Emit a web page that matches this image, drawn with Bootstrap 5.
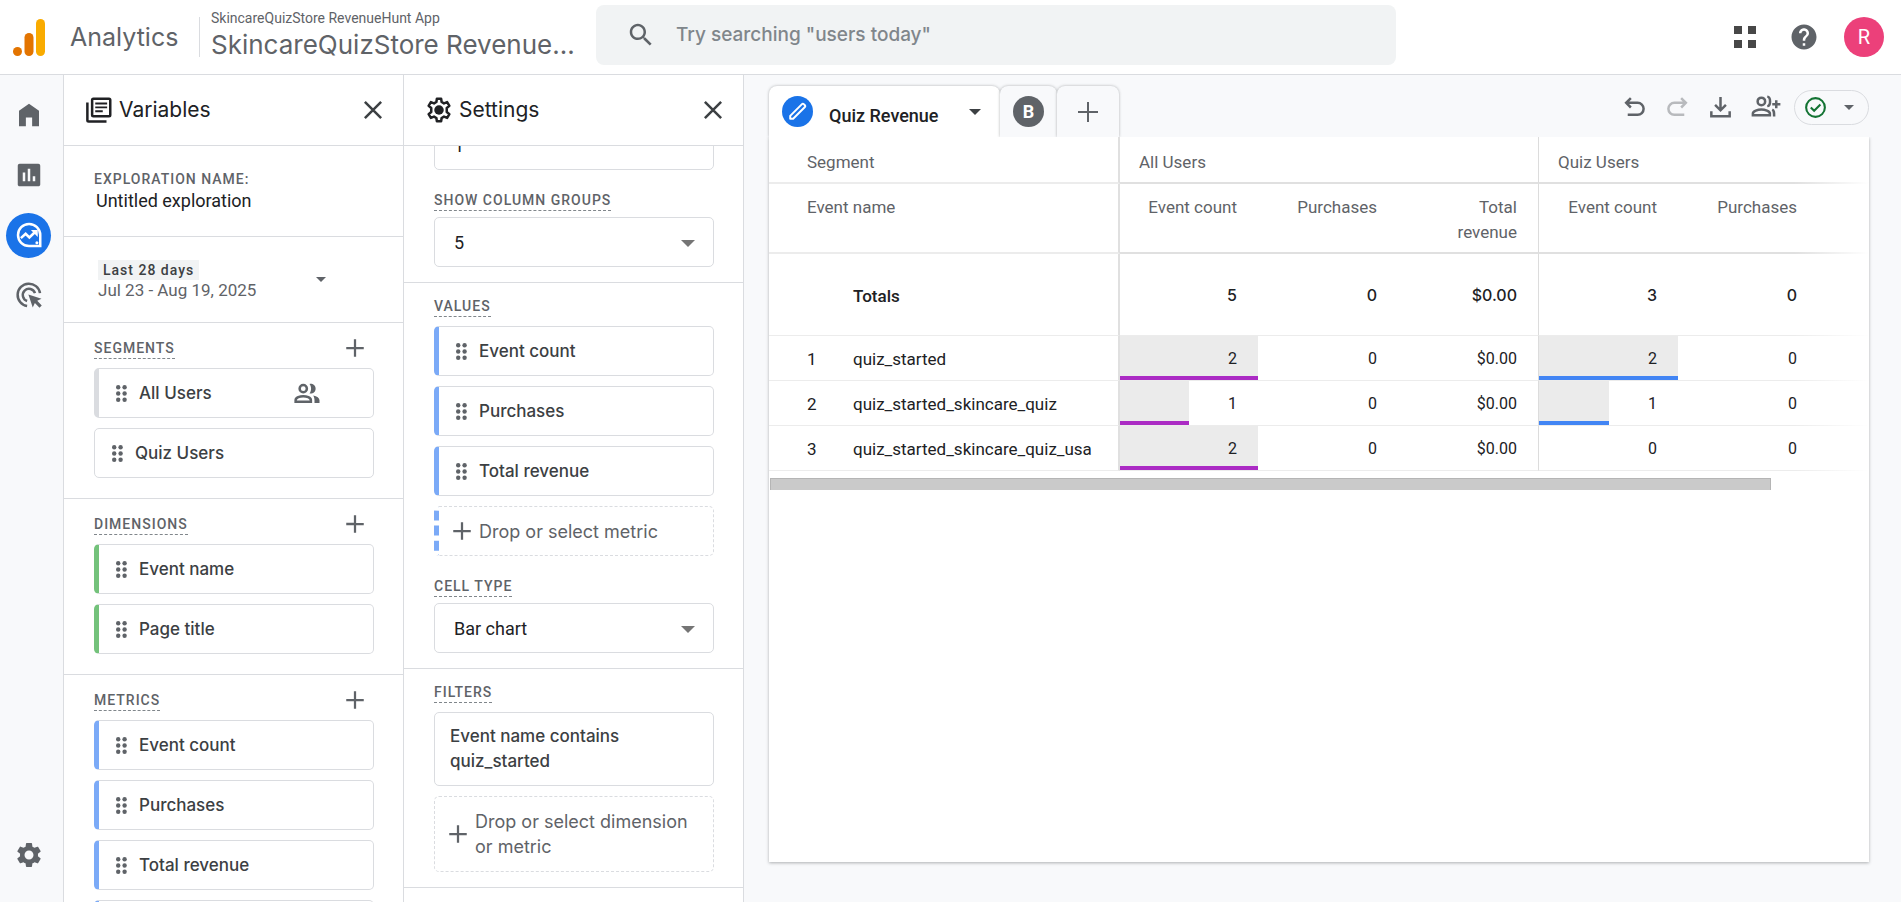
<!DOCTYPE html>
<html lang="en">
<head>
<meta charset="utf-8">
<meta name="viewport" content="width=device-width, initial-scale=1">
<title>Analytics | Quiz Revenue</title>
<link href="https://cdn.jsdelivr.net/npm/bootstrap@5.3.0/dist/css/bootstrap.min.css" rel="stylesheet">
<style>
:root{--line:#dadce0;--ink:#202124;--grey:#5f6368;--paper:#f8f9fb;--brand:Inter,"Open Sans",sans-serif;--ui:Roboto,"Liberation Sans",sans-serif}
body{font-family:var(--ui);font-size:17px;color:var(--ink);background:var(--paper);line-height:25px;height:100vh;overflow:hidden}
.ic{width:30px;height:30px;fill:currentColor;flex:none;display:block}
.ic-sm{width:25px;height:25px}
.st{fill:none;stroke:currentColor;stroke-width:2}
.st-bold{stroke-width:2.4}
.plain{background:none;border:0;padding:0;color:inherit;display:block}
.topbar{height:75px;background:#fff;border-bottom:1px solid var(--line);padding-right:17px}
.brandbox{width:596px;color:var(--grey)}
.logo{width:34px;height:40px;margin-left:12px}
.product{font:400 25px/34px var(--brand);margin-left:24px;width:129px}
.account{border-left:1px solid var(--line);height:40px;padding:0 0 6px 11px}
.acc-small{font-size:14px;line-height:22px}
.acc-big{font:400 26px/32px var(--brand)}
.search{height:60px;max-width:800px;background:#f1f3f4;border-radius:8px;padding:0 30px;margin-bottom:5px}
.search input{background:none;border:0;outline:0;font:500 19px/30px var(--brand);color:var(--grey);margin-left:18px}
.search input::placeholder{color:#80868b;opacity:1}
.avatar{width:40px;height:40px;border-radius:50%;background:#ec407a;color:#fff;font-size:20px}
.rail{width:64px;border-right:1px solid var(--line);padding:10px 0 17px 6px;color:var(--grey)}
.rail a{width:45px;height:60px;color:inherit;display:flex;align-items:center;justify-content:center}
.rail a.on span{width:45px;height:45px;border-radius:50%;background:#1a73e8;color:#fff;display:flex;align-items:center;justify-content:center}
.panel{width:340px;background:#fff;border-right:1px solid var(--line);overflow:hidden}
.panel-head{height:71px;border-bottom:1px solid var(--line);padding:0 15px 0 20px;flex:none}
.panel-head h2{font:400 21px/30px var(--brand);margin:0 0 0 5px}
.panel-head .plain{color:#3c4043}
.block{border-bottom:1px solid var(--line);padding:0 29px 20px 30px}
.panel-set .block{padding-bottom:15px}
.cap{font-size:14px;font-weight:500;line-height:20px;letter-spacing:1px;color:var(--grey)}
.cap-dash{border-bottom:1px dashed #80868b}
.cap-row{height:45px;padding-bottom:9px}
.panel-set .cap-row{height:43px}
.panel-set .cap-select{height:47px;padding-bottom:6px}
.cap-row .ic{margin-right:4px;margin-bottom:-4px;color:var(--grey)}
.chip{width:100%;min-height:50px;border:1px solid var(--line);border-radius:5px;background:#fff;padding:0 18px 0 17px;font:500 17px/25px var(--brand);color:#3c4043;display:flex;align-items:center;text-align:left;margin-bottom:10px}
.chip:last-child{margin-bottom:0}
.chip .grip{width:11px;height:17px;fill:var(--grey);margin-right:12px;flex:none}
.chip .who{color:var(--grey);margin:0 33px 0 auto}
.tag{border-left-width:5px}
.tag-green{border-left-color:#74c27b}
.tag-blue{border-left-color:#7baaf7}
.drop{border-style:dashed;color:var(--grey);font-size:18px;font-weight:400}
.tag.drop{padding-left:8px}
.drop .ic{margin-right:2px}
.filter-chip{padding:11px 15px}
.filter-drop{padding:12px 8px}
.pick{position:relative}
.pick select{appearance:none;width:100%;height:50px;border:1px solid var(--line);border-radius:5px;background:#fff;padding:0 19px;font:400 18px/25px var(--ui);color:var(--ink)}
.pick-arrow::after{content:"";position:absolute;right:19px;top:23px;border:7px solid transparent;border-top-color:#757575;border-bottom:0;pointer-events:none}
.scrolled{height:24px;overflow:hidden;display:flex;align-items:flex-end}
.tri{border:6px solid transparent;border-top-color:currentColor;border-bottom:0}
.tri-sm{border-width:5px;border-bottom:0}
.explore-name{height:91px}
.name-input{border:0;padding:0;margin-left:2px;width:100%;font-size:18px;line-height:24px;color:var(--ink)}
.range{height:86px;padding:0 29px 0 34px}
.last{background:#f1f3f4;font-size:14px;font-weight:500;line-height:20px;letter-spacing:1px;padding:0 5px;color:#3c4043;align-self:flex-start}
.when{line-height:20px;color:var(--grey)}
.work{padding:11px 32px 40px 25px;min-width:0}
.tab{height:51px;border-radius:8px 8px 0 0;box-shadow:0 0 3px rgba(60,64,67,.4);background:var(--paper)}
.tab-on{width:231px;background:#fff;padding:0 19px 0 13px;font-weight:500;font-size:18px}
.dot{width:31px;height:31px;border-radius:50%;color:#fff;display:flex;align-items:center;justify-content:center;flex:none}
.tools{color:var(--grey);height:42px}
.steps{gap:18px;margin-right:13px}
.pill{width:75px;height:35px;border:1px solid var(--line);border-radius:18px;padding:0 14px 0 8px}
.sheet{background:#fff;box-shadow:0 1px 3px rgba(60,64,67,.4);position:relative;clip-path:inset(0 -6px -6px -6px)}
.grid{width:100%;table-layout:fixed;border-collapse:separate;border-spacing:0}
.grid th,.grid td{padding:10px 21px 0;text-align:right;vertical-align:top;border-bottom:1px solid #ececec;font-weight:400;font-size:16px;position:relative;height:45px}
.grid thead th{color:var(--grey);font-size:17px;border-bottom:2px solid #e0e0e0}
.grid tr>:first-child{text-align:left;padding-left:38px;padding-top:11px;border-right:2px solid #e0e0e0;font-size:17px}
.grid thead tr>:first-child{border-bottom-color:#ececec}
.grid .seg-row th{height:47px;padding-top:13px;text-align:left;padding-left:19px}
.grid .seg-row th:first-child{padding-left:38px}
.grid .name-row th,.grid .name-row th:first-child{height:70px;padding-top:11px}
.grid .sum>*{height:82px;padding-top:29px;font-weight:500;font-family:var(--brand)}
.grid .sum>:first-child{font-family:var(--ui);font-weight:500;padding-top:30px;padding-left:84px}
.grid .edge{border-left:1px solid #dcdcdc}
.num{display:inline-block;width:46px}
.bar{position:absolute;left:0;top:0;bottom:0;background:#ebebeb;border-bottom:4px solid #ab2bc4}
.bar-blue{border-bottom-color:#4285f4}
.val{position:relative}
.fade-end{position:absolute;top:0;right:0;bottom:0;width:75px;background:linear-gradient(90deg,rgba(255,255,255,0),#fff)}
.thumb{height:12px;background:#cacaca;border:1px solid #b5b5b5;border-width:1px 1px 0;width:91%;margin:7px 1px 0}
</style>
</head>
<body class="d-flex flex-column">
<svg class="d-none">
<symbol id="i-close" viewBox="0 0 24 24"><path class="st" d="M5.500 5.500 18.500 18.500M18.500 5.500 5.500 18.500"/></symbol>
<symbol id="i-plus" viewBox="0 0 24 24"><path d="M11.100 5h1.800v6.100H19v1.800h-6.100V19h-1.800v-6.100H5v-1.800h6.100z"/></symbol>
<symbol id="i-grip" viewBox="0 0 11 17"><circle cx="2.200" cy="2.200" r="2.200"/><circle cx="8.600" cy="2.200" r="2.200"/><circle cx="2.200" cy="8.500" r="2.200"/><circle cx="8.600" cy="8.500" r="2.200"/><circle cx="2.200" cy="14.800" r="2.200"/><circle cx="8.600" cy="14.800" r="2.200"/></symbol>
<symbol id="i-gear" viewBox="0 0 24 24"><path d="M19.140 12.940c.04-.3.06-.61.06-.94 0-.32-.02-.64-.07-.94l2.030-1.580c.18-.14.23-.41.12-.61l-1.920-3.320c-.12-.22-.37-.29-.59-.22l-2.390.96c-.5-.38-1.030-.7-1.620-.94l-.36-2.540c-.04-.24-.24-.41-.48-.41h-3.840c-.24 0-.43.17-.47.41l-.36 2.540c-.59.24-1.130.57-1.620.94l-2.390-.96c-.22-.08-.47 0-.59.22L2.740 8.870c-.12.21-.08.47.12.61l2.030 1.580c-.05.3-.09.63-.09.94s.02.64.07.94l-2.030 1.580c-.18.14-.23.41-.12.61l1.920 3.320c.12.22.37.29.59.22l2.390-.96c.5.38 1.030.7 1.620.94l.36 2.540c.05.24.24.41.48.41h3.840c.24 0 .44-.17.47-.41l.36-2.540c.59-.24 1.130-.56 1.620-.94l2.390.96c.22.08.47 0 .59-.22l1.920-3.320c.12-.22.07-.47-.12-.61l-2.010-1.580zM12 15.600c-1.980 0-3.600-1.620-3.600-3.600s1.620-3.600 3.600-3.600 3.600 1.620 3.600 3.600-1.620 3.600-3.600 3.600z"/></symbol>
<symbol id="i-people" viewBox="0 0 24 24"><circle class="st" cx="9" cy="8.500" r="2.900"/><path class="st" d="M2.900 19v-1.300c0-2 3.500-3.200 6.100-3.200s6.100 1.200 6.100 3.200V19z"/><path d="M14 4.700c2.200-.5 4.900.9 4.900 3.800s-2.700 4.300-4.900 3.800c1.700-2 1.700-5.600 0-7.600zM17 13.900c3 .6 5 1.900 5 3.900V20h-4v-2.200c0-1.600-.4-2.900-1-3.900z"/></symbol>
</svg>

<header class="topbar d-flex align-items-center flex-shrink-0">
  <div class="brandbox d-flex align-items-center flex-shrink-0 pe-3">
    <svg class="logo" viewBox="0 0 34 40"><rect x="24" y="2" width="9" height="37" rx="4.500" fill="#f9ab00"/><rect x="12.500" y="16" width="9" height="23" rx="4.500" fill="#e37400"/><circle cx="5.500" cy="34.500" r="4.500" fill="#e37400"/></svg>
    <div class="product">Analytics</div>
    <div class="account d-flex flex-column justify-content-center text-nowrap">
      <div class="acc-small">SkincareQuizStore RevenueHunt App</div>
      <div class="acc-big">SkincareQuizStore Revenue...</div>
    </div>
  </div>
  <label class="search d-flex align-items-center flex-grow-1">
    <svg class="ic" viewBox="0 0 24 24" style="color:#5f6368"><path d="M15.500 14h-.79l-.28-.27C15.410 12.590 16 11.110 16 9.500 16 5.910 13.090 3 9.500 3S3 5.910 3 9.500 5.910 16 9.500 16c1.610 0 3.090-.59 4.230-1.570l.27.28v.79l5 4.990L20.490 19l-4.990-5zm-6 0C7.010 14 5 11.990 5 9.500S7.010 5 9.500 5 14 7.010 14 9.500 11.990 14 9.500 14z"/></svg>
    <input class="flex-grow-1" type="text" aria-label="Search" placeholder="Try searching &quot;users today&quot;">
  </label>
  <div class="d-flex align-items-center ms-auto" style="color:#5f6368;gap:25px">
    <button class="plain me-1" aria-label="Apps"><svg class="ic" viewBox="0 0 30 30"><path fill="#474747" d="M4 4h8v8H4zM18 4h8v8h-8zM4 18h8v8H4zM18 18h8v8h-8z"/></svg></button>
    <button class="plain" aria-label="Help"><svg class="ic" viewBox="0 0 24 24"><path d="M12 2C6.480 2 2 6.480 2 12s4.480 10 10 10 10-4.480 10-10S17.520 2 12 2zm1 17h-2v-2h2v2zm2.070-7.750l-.9.92C13.450 12.900 13 13.500 13 15h-2v-.5c0-1.100.45-2.100 1.170-2.830l1.240-1.260c.37-.36.59-.86.59-1.410 0-1.100-.9-2-2-2s-2 .9-2 2H8c0-2.210 1.790-4 4-4s4 1.790 4 4c0 .88-.36 1.680-.93 2.250z"/></svg></button>
    <button class="plain avatar">R</button>
  </div>
</header>

<div class="d-flex flex-grow-1" style="min-height:0">
  <nav class="rail d-flex flex-column flex-shrink-0">
    <a href="#" aria-label="Home"><svg class="ic" viewBox="0 0 24 24"><path d="M4 21V8.500L12 3l8 5.500V21h-5.500v-7h-5v7z"/></svg></a>
    <a href="#" aria-label="Reports"><svg class="ic" viewBox="0 0 24 24"><path d="M19.500 3h-15C3.700 3 3 3.700 3 4.500v15c0 .8.7 1.500 1.500 1.500h15c.8 0 1.500-.7 1.500-1.500v-15c0-.8-.7-1.500-1.500-1.500zM9 17H7v-7h2v7zm4 0h-2V7h2v10zm4 0h-2v-4h2v4z"/></svg></a>
    <a href="#" class="on" aria-label="Explore"><span><svg class="ic" viewBox="0 0 24 24"><path class="st" d="M12 3.200a8.800 8.800 0 1 0 0 17.600h9V12a8.900 8.900 0 0 0-9-8.800z"/><path class="st" d="M5.500 14.500 9.300 11l3 3L17.500 9"/><path d="M13.500 8H19v5.500z"/><circle cx="18.300" cy="18.200" r="1.200"/></svg></span></a>
    <a href="#" aria-label="Advertising"><svg class="ic" viewBox="0 0 24 24"><path class="st" d="M10.500 20.800A9 9 0 1 1 20.800 10.500M10.500 16.800A5 5 0 1 1 16.800 10.500"/><path d="M11.500 11.500 22 15l-3.400 1.600 3.600 3.700-1.800 1.800-3.700-3.700L15 22z"/></svg></a>
    <a href="#" class="mt-auto" aria-label="Admin"><svg class="ic"><use href="#i-gear"/></svg></a>
  </nav>

  <section class="panel d-flex flex-column flex-shrink-0">
    <div class="panel-head d-flex align-items-center">
      <svg class="ic" viewBox="0 0 24 24"><path class="st" d="M7.500 2.900H20a1 1 0 0 1 1 1v12a1 1 0 0 1-1 1H7.500a1 1 0 0 1-1-1V3.900a1 1 0 0 1 1-1zM2.700 6v14.200a1 1 0 0 0 1 1H18"/><path d="M9 6h9.500v1.500H9zM9 9.100h9.500v1.500H9zM9 12.200h6v1.500H9z"/></svg>
      <h2>Variables</h2>
      <button class="plain ms-auto" aria-label="Close variables"><svg class="ic"><use href="#i-close"/></svg></button>
    </div>
    <div class="block explore-name py-0 d-flex flex-column justify-content-center flex-shrink-0">
      <label class="cap" for="exname">EXPLORATION NAME:</label>
      <input id="exname" class="name-input" type="text" value="Untitled exploration">
    </div>
    <button class="plain block range d-flex align-items-center flex-shrink-0 text-start">
      <span class="d-flex flex-column"><span class="last">Last 28 days</span><span class="when">Jul 23 - Aug 19, 2025</span></span>
      <span class="tri tri-sm ms-auto me-5" style="color:#5f6368"></span>
    </button>
    <div class="block flex-shrink-0">
      <div class="cap-row d-flex align-items-end justify-content-between"><span class="cap cap-dash">SEGMENTS</span><button class="plain" aria-label="Add segment"><svg class="ic"><use href="#i-plus"/></svg></button></div>
      <button class="chip tag"><svg class="grip"><use href="#i-grip"/></svg>All Users<svg class="ic who"><use href="#i-people"/></svg></button>
      <button class="chip"><svg class="grip"><use href="#i-grip"/></svg>Quiz Users</button>
    </div>
    <div class="block flex-shrink-0">
      <div class="cap-row d-flex align-items-end justify-content-between"><span class="cap cap-dash">DIMENSIONS</span><button class="plain" aria-label="Add dimension"><svg class="ic"><use href="#i-plus"/></svg></button></div>
      <button class="chip tag tag-green"><svg class="grip"><use href="#i-grip"/></svg>Event name</button>
      <button class="chip tag tag-green"><svg class="grip"><use href="#i-grip"/></svg>Page title</button>
    </div>
    <div class="block flex-shrink-0">
      <div class="cap-row d-flex align-items-end justify-content-between"><span class="cap cap-dash">METRICS</span><button class="plain" aria-label="Add metric"><svg class="ic"><use href="#i-plus"/></svg></button></div>
      <button class="chip tag tag-blue"><svg class="grip"><use href="#i-grip"/></svg>Event count</button>
      <button class="chip tag tag-blue"><svg class="grip"><use href="#i-grip"/></svg>Purchases</button>
      <button class="chip tag tag-blue"><svg class="grip"><use href="#i-grip"/></svg>Total revenue</button>
      <div class="chip tag tag-blue"></div>
    </div>
  </section>

  <section class="panel panel-set d-flex flex-column flex-shrink-0">
    <div class="panel-head d-flex align-items-center">
      <svg class="ic" viewBox="0 0 24 24"><path class="st" stroke-linejoin="round" d="M9.900 5.600 10.300 3h3.400l.4 2.600 1.900 1.100 2.500-1 1.800 3-2.100 1.700v3.200l2.100 1.700-1.800 3-2.500-1-1.900 1.100-.4 2.600h-3.400l-.4-2.600L8 17.300l-2.500 1-1.800-3 2.100-1.700v-3.200L3.700 8.700l1.800-3 2.500 1z"/><circle cx="12" cy="12" r="3.800"/></svg>
      <h2>Settings</h2>
      <button class="plain ms-auto" aria-label="Close settings"><svg class="ic"><use href="#i-close"/></svg></button>
    </div>
    <div class="block flex-shrink-0">
      <div class="scrolled"><div class="pick w-100"><select aria-label="Start column group"><option>1</option></select></div></div>
      <div class="cap-row cap-select d-flex align-items-end"><label class="cap cap-dash" for="groups">SHOW COLUMN GROUPS</label></div>
      <div class="pick pick-arrow"><select id="groups"><option>5</option></select></div>
    </div>
    <div class="block flex-shrink-0">
      <div class="cap-row d-flex align-items-end"><span class="cap cap-dash">VALUES</span></div>
      <button class="chip tag tag-blue"><svg class="grip"><use href="#i-grip"/></svg>Event count</button>
      <button class="chip tag tag-blue"><svg class="grip"><use href="#i-grip"/></svg>Purchases</button>
      <button class="chip tag tag-blue"><svg class="grip"><use href="#i-grip"/></svg>Total revenue</button>
      <button class="chip tag tag-blue drop mb-0"><svg class="ic"><use href="#i-plus"/></svg>Drop or select metric</button>
      <div class="cap-row cap-select d-flex align-items-end"><label class="cap cap-dash" for="cell">CELL TYPE</label></div>
      <div class="pick pick-arrow"><select id="cell"><option>Bar chart</option></select></div>
    </div>
    <div class="block flex-shrink-0">
      <div class="cap-row d-flex align-items-end"><span class="cap cap-dash">FILTERS</span></div>
      <button class="chip filter-chip">Event name contains<br>quiz_started</button>
      <button class="chip drop filter-drop"><svg class="ic"><use href="#i-plus"/></svg><span>Drop or select dimension<br>or metric</span></button>
    </div>
  </section>

  <main class="work d-flex flex-column flex-grow-1">
    <div class="d-flex">
      <div class="tab tab-on d-flex align-items-center">
        <span class="dot" style="background:#1a73e8"><svg class="ic ic-sm" viewBox="0 0 24 24"><path fill="none" stroke="#fff" stroke-width="1.900" stroke-linejoin="round" d="M5 19v-2.800L16.300 4.900a1.200 1.200 0 0 1 1.700 0l1.100 1.100a1.200 1.200 0 0 1 0 1.700L7.800 19z"/></svg></span>
        <span class="ps-3 pt-2">Quiz Revenue</span>
        <span class="tri ms-auto" style="color:#3c4043"></span>
      </div>
      <button class="plain tab d-flex align-items-center justify-content-center" style="width:57px"><span class="dot fw-bold" style="background:#5f6368;font-size:18px">B</span></button>
      <button class="plain tab d-flex align-items-center justify-content-center" style="width:62px;color:#5f6368" aria-label="Add tab"><svg class="ic" viewBox="0 0 30 30"><path d="M14 5h2v9h9v2h-9v9h-2v-9H5v-2h9z"/></svg></button>
      <div class="tools d-flex align-items-center ms-auto">
        <div class="steps d-flex align-items-center">
          <button class="plain" aria-label="Undo"><svg class="ic ic-sm" viewBox="0 0 24 24"><path class="st st-bold" d="M8.500 3 4 7.500 8.500 12M4 7.500h11a5.500 5.500 0 0 1 0 11.500H5.500"/></svg></button>
          <button class="plain" style="color:#b8babd" aria-label="Redo"><svg class="ic ic-sm" viewBox="0 0 24 24"><path class="st st-bold" d="M15.500 3 20 7.500 15.500 12M20 7.500H9A5.500 5.500 0 0 0 9 19h9.500"/></svg></button>
          <button class="plain" aria-label="Download"><svg class="ic ic-sm" viewBox="0 0 24 24"><path class="st st-bold" d="M12 2v12.500M6.800 9.500 12 14.700l5.200-5.200M3.200 15.500v5h17.600v-5"/></svg></button>
          <button class="plain" aria-label="Share"><svg class="ic" viewBox="0 0 24 24"><circle class="st" cx="8.300" cy="7.500" r="3"/><path class="st" d="M1.500 18.500v-1.300c0-2 4-3.200 6.800-3.200s6.800 1.200 6.800 3.200v1.300zM13 3.700c3 .3 3 7.300 0 7.600M17 14c1.500.8 1.500 2 1.500 5.500M20.200 6.500v6.500M17 9.700h6.500"/></svg></button>
        </div>
        <button class="plain pill d-flex align-items-center justify-content-between" aria-label="Data quality"><svg class="ic ic-sm" viewBox="0 0 24 24" style="color:#137333"><circle class="st" cx="12" cy="12" r="9"/><path class="st" d="m7.500 12 3.200 3.200 6-6"/></svg><span class="tri tri-sm"></span></button>
      </div>
    </div>
    <div class="sheet flex-grow-1">
      <div class="position-relative overflow-hidden">
        <table class="grid">
          <colgroup><col style="width:351px"><col style="width:138px"><col style="width:140px"><col style="width:140px"><col style="width:140px"><col style="width:140px"><col></colgroup>
          <thead>
            <tr class="seg-row"><th>Segment</th><th colspan="3">All Users</th><th class="edge" colspan="3">Quiz Users</th></tr>
            <tr class="name-row"><th>Event name</th><th>Event count</th><th>Purchases</th><th>Total revenue</th><th class="edge">Event count</th><th>Purchases</th><th></th></tr>
          </thead>
          <tbody>
            <tr class="sum"><th>Totals</th><td>5</td><td>0</td><td>$0.00</td><td class="edge">3</td><td>0</td><td></td></tr>
            <tr><th><span class="num">1</span>quiz_started</th><td><div class="bar" style="width:100%"></div><span class="val">2</span></td><td>0</td><td>$0.00</td><td class="edge"><div class="bar bar-blue" style="width:100%"></div><span class="val">2</span></td><td>0</td><td></td></tr>
            <tr><th><span class="num">2</span>quiz_started_skincare_quiz</th><td><div class="bar" style="width:50%"></div><span class="val">1</span></td><td>0</td><td>$0.00</td><td class="edge"><div class="bar bar-blue" style="width:50%"></div><span class="val">1</span></td><td>0</td><td></td></tr>
            <tr><th><span class="num">3</span>quiz_started_skincare_quiz_usa</th><td><div class="bar" style="width:100%"></div><span class="val">2</span></td><td>0</td><td>$0.00</td><td class="edge">0</td><td>0</td><td></td></tr>
          </tbody>
        </table>
        <div class="fade-end"></div>
      </div>
      <div class="thumb"></div>
    </div>
  </main>
</div>
<script src="https://cdn.jsdelivr.net/npm/bootstrap@5.3.0/dist/js/bootstrap.bundle.min.js"></script>
</body>
</html>
